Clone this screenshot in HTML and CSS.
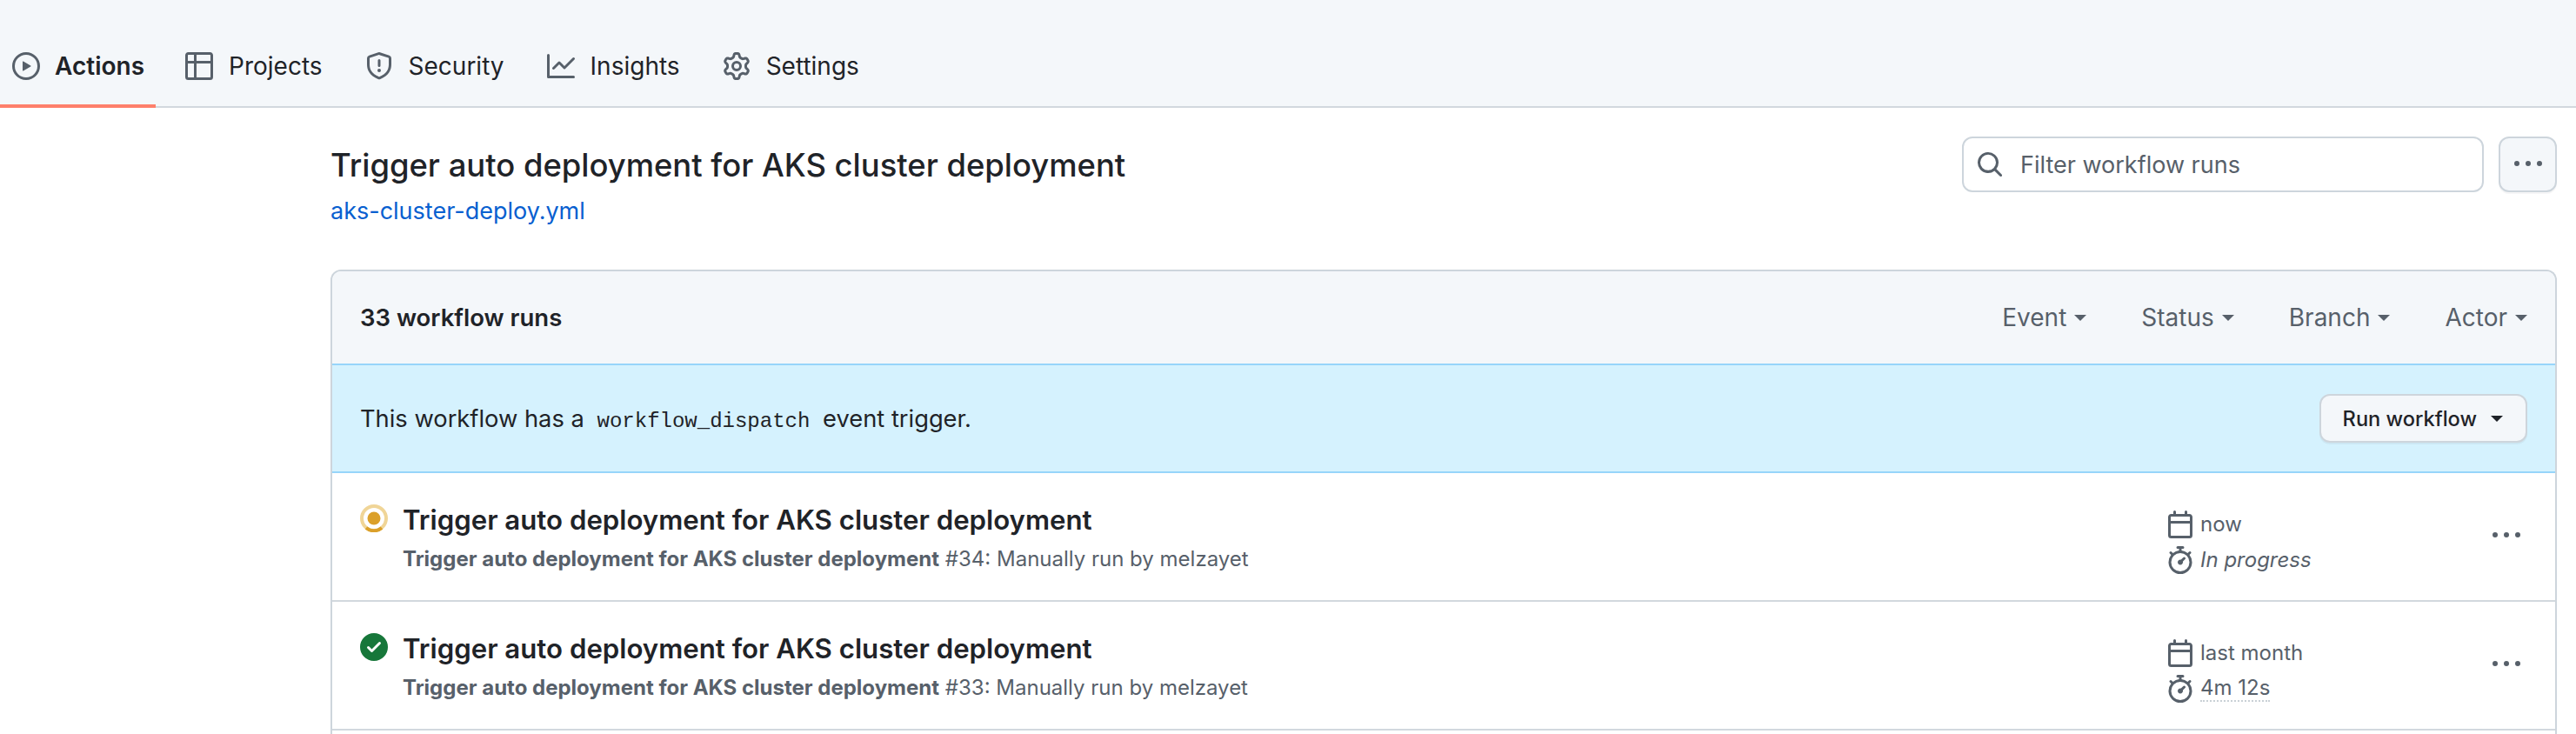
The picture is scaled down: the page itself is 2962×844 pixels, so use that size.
FILE: index.html
```html
<!DOCTYPE html>
<html lang="en">
  <head>
    <meta charset="UTF-8" />
    <meta name="viewport" content="width=device-width, initial-scale=1.0" />
    <title>Trigger auto deployment for AKS cluster deployment</title>
    <link rel="stylesheet" href="styles.css">
  </head>
  <body>
    <svg class="defs" aria-hidden="true">
      <symbol id="i-play" viewBox="0 0 16 16"><path d="M8 0a8 8 0 1 1 0 16A8 8 0 0 1 8 0ZM1.5 8a6.5 6.5 0 1 0 13 0 6.5 6.5 0 0 0-13 0Zm4.879-2.773 4.264 2.559a.25.25 0 0 1 0 .428l-4.264 2.559A.25.25 0 0 1 6 10.559V5.442a.25.25 0 0 1 .379-.215Z"/></symbol>
      <symbol id="i-table" viewBox="0 0 16 16"><path d="M0 1.75C0 .784.784 0 1.75 0h12.5C15.216 0 16 .784 16 1.75v12.5A1.75 1.75 0 0 1 14.25 16H1.75A1.75 1.75 0 0 1 0 14.25ZM6.5 6.5v8h7.75a.25.25 0 0 0 .25-.25V6.5Zm8-1.5V1.75a.25.25 0 0 0-.25-.25H6.5V5Zm-13 1.5v7.75c0 .138.112.25.25.25H5v-8ZM5 5V1.5H1.75a.25.25 0 0 0-.25.25V5Z"/></symbol>
      <symbol id="i-shield" viewBox="0 0 16 16"><path d="M7.467.133a1.748 1.748 0 0 1 1.066 0l5.25 1.68A1.75 1.75 0 0 1 15 3.48V7c0 1.566-.32 3.182-1.303 4.682-.983 1.498-2.585 2.813-5.032 3.855a1.697 1.697 0 0 1-1.33 0c-2.447-1.042-4.049-2.357-5.032-3.855C1.32 10.182 1 8.566 1 7V3.48a1.75 1.75 0 0 1 1.217-1.667Zm.61 1.429a.25.25 0 0 0-.153 0l-5.25 1.68a.25.25 0 0 0-.174.238V7c0 1.358.275 2.666 1.057 3.86.784 1.194 2.121 2.34 4.366 3.297a.196.196 0 0 0 .154 0c2.245-.956 3.582-2.104 4.366-3.298C13.225 9.666 13.5 8.36 13.5 7V3.48a.251.251 0 0 0-.174-.237l-5.25-1.68ZM8.75 4.75v3a.75.75 0 0 1-1.5 0v-3a.75.75 0 0 1 1.5 0ZM9 10.5a1 1 0 1 1-2 0 1 1 0 0 1 2 0Z"/></symbol>
      <symbol id="i-graph" viewBox="0 0 16 16"><path d="M1.5 1.75V13.5h13.75a.75.75 0 0 1 0 1.5H.75a.75.75 0 0 1-.75-.75V1.75a.75.75 0 0 1 1.5 0Zm14.28 2.53-5.25 5.25a.75.75 0 0 1-1.06 0L7 7.06 4.28 9.78a.751.751 0 0 1-1.042-.018.751.751 0 0 1-.018-1.042l3.25-3.25a.75.75 0 0 1 1.06 0L10 7.94l4.72-4.72a.751.751 0 0 1 1.042.018.751.751 0 0 1 .018 1.042Z"/></symbol>
      <symbol id="i-gear" viewBox="0 0 16 16"><path d="M8 0a8.2 8.2 0 0 1 .701.031C9.444.095 9.99.645 10.16 1.29l.288 1.107c.018.066.079.158.212.224.231.114.454.243.668.386.123.082.233.09.299.071l1.103-.303c.644-.176 1.392.021 1.82.63.27.385.506.792.704 1.218.315.675.111 1.422-.364 1.891l-.814.806c-.049.048-.098.147-.088.294.016.257.016.515 0 .772-.01.147.038.246.088.294l.814.806c.475.469.679 1.216.364 1.891a7.977 7.977 0 0 1-.704 1.217c-.428.61-1.176.807-1.82.63l-1.102-.302c-.067-.019-.177-.011-.3.071a5.909 5.909 0 0 1-.668.386c-.133.066-.194.158-.211.224l-.29 1.106c-.168.646-.715 1.196-1.458 1.26a8.006 8.006 0 0 1-1.402 0c-.743-.064-1.289-.614-1.458-1.26l-.289-1.106c-.018-.066-.079-.158-.212-.224a5.738 5.738 0 0 1-.668-.386c-.123-.082-.233-.09-.299-.071l-1.103.303c-.644.176-1.392-.021-1.82-.63a8.12 8.12 0 0 1-.704-1.218c-.315-.675-.111-1.422.363-1.891l.815-.806c.05-.048.098-.147.088-.294a6.214 6.214 0 0 1 0-.772c.01-.147-.038-.246-.088-.294l-.815-.806C.635 6.045.431 5.298.746 4.623a7.92 7.92 0 0 1 .704-1.217c.428-.61 1.176-.807 1.82-.63l1.102.302c.067.019.177.011.3-.071.214-.143.437-.272.668-.386.133-.066.194-.158.211-.224l.29-1.106C6.009.645 6.556.095 7.299.03 7.53.01 7.764 0 8 0Zm-.571 1.525c-.036.003-.108.036-.137.146l-.289 1.105c-.147.561-.549.967-.998 1.189-.173.086-.34.183-.5.29-.417.278-.97.423-1.529.27l-1.103-.303c-.109-.03-.175.016-.195.045-.22.312-.412.644-.573.99-.014.031-.021.11.059.19l.815.806c.411.406.562.957.53 1.456a4.709 4.709 0 0 0 0 .582c.032.499-.119 1.05-.53 1.456l-.815.806c-.081.08-.073.159-.059.19.162.346.353.677.573.989.02.03.085.076.195.046l1.102-.303c.56-.153 1.113-.008 1.53.27.161.107.328.204.501.29.447.222.85.629.997 1.189l.289 1.105c.029.109.101.143.137.146a6.6 6.6 0 0 0 1.142 0c.036-.003.108-.036.137-.146l.289-1.105c.147-.561.549-.967.998-1.189.173-.086.34-.183.5-.29.417-.278.97-.423 1.529-.27l1.103.303c.109.029.175-.016.195-.045.22-.313.411-.644.573-.99.014-.031.021-.11-.059-.19l-.815-.806c-.411-.406-.562-.957-.53-1.456a4.709 4.709 0 0 0 0-.582c-.032-.499.119-1.05.53-1.456l.815-.806c.081-.08.073-.159.059-.19a6.464 6.464 0 0 0-.573-.989c-.02-.03-.085-.076-.195-.046l-1.102.303c-.56.153-1.113.008-1.53-.27a4.44 4.44 0 0 0-.501-.29c-.447-.222-.85-.629-.997-1.189l-.289-1.105c-.029-.11-.101-.143-.137-.146a6.6 6.6 0 0 0-1.142 0ZM11 8a3 3 0 1 1-6 0 3 3 0 0 1 6 0ZM9.5 8a1.5 1.5 0 1 0-3.001.001A1.5 1.5 0 0 0 9.5 8Z"/></symbol>
      <symbol id="i-search" viewBox="0 0 16 16"><path d="M10.68 11.74a6 6 0 0 1-7.922-8.982 6 6 0 0 1 8.982 7.922l3.04 3.04a.749.749 0 0 1-.326 1.275.749.749 0 0 1-.734-.215ZM11.5 7a4.499 4.499 0 1 0-8.997 0A4.499 4.499 0 0 0 11.5 7Z"/></symbol>
      <symbol id="i-kebab" viewBox="0 0 16 16"><path d="M8 9a1.5 1.5 0 1 0 0-3 1.5 1.5 0 0 0 0 3ZM1.5 9a1.5 1.5 0 1 0 0-3 1.5 1.5 0 0 0 0 3Zm13 0a1.5 1.5 0 1 0 0-3 1.5 1.5 0 0 0 0 3Z"/></symbol>
      <symbol id="i-calendar" viewBox="0 0 16 16"><path d="M4.75 0a.75.75 0 0 1 .75.75V2h5V.75a.75.75 0 0 1 1.5 0V2h1.25c.966 0 1.75.784 1.75 1.75v10.5A1.75 1.75 0 0 1 13.25 16H2.75A1.75 1.75 0 0 1 1 14.25V3.75C1 2.784 1.784 2 2.75 2H4V.75A.75.75 0 0 1 4.75 0ZM2.5 7.5v6.75c0 .138.112.25.25.25h10.5a.25.25 0 0 0 .25-.25V7.5Zm10.75-4H2.75a.25.25 0 0 0-.25.25V6h11V3.75a.25.25 0 0 0-.25-.25Z"/></symbol>
      <symbol id="i-stopwatch" viewBox="0 0 16 16"><path d="M5.75.75A.75.75 0 0 1 6.5 0h3a.75.75 0 0 1 0 1.5h-.75v1l-.001.041a6.724 6.724 0 0 1 3.464 1.435l.007-.006.75-.75a.749.749 0 0 1 1.275.326.749.749 0 0 1-.215.734l-.75.75-.006.007a6.75 6.75 0 1 1-10.548 0L2.72 5.03l-.75-.75a.751.751 0 0 1 .018-1.042.751.751 0 0 1 1.042-.018l.75.75.007.006A6.72 6.72 0 0 1 7.25 2.541V1.5H6.5a.75.75 0 0 1-.75-.75ZM8 14.5a5.25 5.25 0 1 0-.001-10.501A5.25 5.25 0 0 0 8 14.5Zm.389-6.7 1.33-1.33a.75.75 0 1 1 1.061 1.06L9.45 8.861A1.503 1.503 0 0 1 8 10.75a1.499 1.499 0 1 1 .389-2.95Z"/></symbol>
      <symbol id="i-check" viewBox="0 0 16 16"><path d="M8 16A8 8 0 1 1 8 0a8 8 0 0 1 0 16Zm3.78-9.72a.751.751 0 0 0-.018-1.042.751.751 0 0 0-1.042-.018L6.75 9.19 5.28 7.72a.751.751 0 0 0-1.042.018.751.751 0 0 0-.018 1.042l2 2a.75.75 0 0 0 1.06 0Z"/></symbol>
    </svg>

    <nav class="tabs">
      <a class="tab active"><svg class="icon"><use href="#i-play"/></svg>Actions</a>
      <a class="tab"><svg class="icon"><use href="#i-table"/></svg>Projects</a>
      <a class="tab"><svg class="icon"><use href="#i-shield"/></svg>Security</a>
      <a class="tab"><svg class="icon"><use href="#i-graph"/></svg>Insights</a>
      <a class="tab"><svg class="icon"><use href="#i-gear"/></svg>Settings</a>
    </nav>

    <main class="content">
      <div class="top">
        <div class="top-title">
          <h1>Trigger auto deployment for AKS cluster deployment</h1>
          <a class="file-link">aks-cluster-deploy.yml</a>
        </div>
        <div class="top-tools">
          <label class="search">
            <svg class="icon"><use href="#i-search"/></svg>
            <span>Filter workflow runs</span>
          </label>
          <button class="more-btn"><svg class="icon"><use href="#i-kebab"/></svg></button>
        </div>
      </div>

      <section class="box">
        <div class="box-head">
          <strong>33 workflow runs</strong>
          <div class="filters">
            <span class="filter">Event<i class="caret"></i></span>
            <span class="filter">Status<i class="caret"></i></span>
            <span class="filter">Branch<i class="caret"></i></span>
            <span class="filter">Actor<i class="caret"></i></span>
          </div>
        </div>

        <div class="notice">
          <span>This workflow has a <code>workflow_dispatch</code> event trigger.</span>
          <button class="run-btn">Run workflow<i class="caret"></i></button>
        </div>

        <div class="run">
          <svg class="status" viewBox="0 0 32 32">
            <circle class="ring" cx="16" cy="16" r="14" />
            <path class="ring-arc" d="M7 27a14 14 0 0 0 18 0" />
            <circle class="dot" cx="16" cy="16" r="7.5" />
          </svg>
          <div class="run-main">
            <div class="run-title">Trigger auto deployment for AKS cluster deployment</div>
            <div class="run-sub"><b>Trigger auto deployment for AKS cluster deployment</b> #34: Manually run by melzayet</div>
          </div>
          <div class="run-meta">
            <div class="meta-line"><svg class="icon"><use href="#i-calendar"/></svg>now</div>
            <div class="meta-line"><svg class="icon"><use href="#i-stopwatch"/></svg><em>In progress</em></div>
          </div>
          <svg class="icon run-more"><use href="#i-kebab"/></svg>
        </div>

        <div class="run">
          <svg class="status success"><use href="#i-check"/></svg>
          <div class="run-main">
            <div class="run-title">Trigger auto deployment for AKS cluster deployment</div>
            <div class="run-sub"><b>Trigger auto deployment for AKS cluster deployment</b> #33: Manually run by melzayet</div>
          </div>
          <div class="run-meta">
            <div class="meta-line"><svg class="icon"><use href="#i-calendar"/></svg>last month</div>
            <div class="meta-line"><svg class="icon"><use href="#i-stopwatch"/></svg><span class="dotted">4m 12s</span></div>
          </div>
          <svg class="icon run-more"><use href="#i-kebab"/></svg>
        </div>
      </section>
    </main>
  </body>
</html>
```

FILE: styles.css
```css
* {
  box-sizing: border-box;
}
html,
body {
  margin: 0;
  height: 844px;
  overflow: hidden;
}
body {
  background: #fff;
  color: #1f2328;
  font-family: Inter, "Liberation Sans", sans-serif;
  font-size: 28px;
}
.defs {
  display: none;
}
.icon {
  width: 32px;
  height: 32px;
  fill: #57606a;
  flex: none;
}

/* tabs */
.tabs {
  display: flex;
  align-items: flex-end;
  gap: 19px;
  height: 124px;
  padding-bottom: 2px;
  background: #f4f7fa;
  border-bottom: 2px solid #d2d8de;
}
.tab {
  display: flex;
  align-items: center;
  gap: 18px;
  height: 78px;
  padding: 0 15px 14px;
  margin-bottom: -4px;
  border-bottom: 4px solid transparent;
}
.tab.active {
  gap: 17px;
  padding-left: 14px;
  padding-right: 13px;
  font-weight: 600;
  border-bottom-color: #fe7f6b;
}

/* title row */
.content {
  padding: 33px 22px 0 380px;
}
.top {
  display: flex;
  justify-content: space-between;
  align-items: flex-start;
  height: 153px;
}
h1 {
  margin: 0 0 2px;
  font-size: 36.4px;
  font-weight: 500;
  line-height: 66px;
}
.file-link {
  display: block;
  color: #0860d0;
  font-size: 27px;
  line-height: 36px;
}
.top-tools {
  display: flex;
  gap: 17px;
}
.search {
  display: flex;
  align-items: center;
  gap: 19px;
  width: 600px;
  height: 64px;
  padding: 0 14px;
  border: 2px solid #cdd5dc;
  border-radius: 12px;
  color: #57606a;
  font-size: 27px;
}
.more-btn {
  display: flex;
  justify-content: center;
  align-items: center;
  width: 67px;
  height: 64px;
  padding: 0;
  background: #f4f7fa;
  border: 2px solid #cdd5dc;
  border-radius: 12px;
  box-shadow: 0 2px 0 rgba(31, 35, 40, 0.04);
}

/* workflow runs box */
.box {
  height: 534px;
  border: 2px solid #cdd5dc;
  border-bottom: 0;
  border-radius: 12px 12px 0 0;
}
.box-head {
  display: flex;
  justify-content: space-between;
  align-items: center;
  height: 106px;
  padding: 0 32px;
  background: #f4f7fa;
  border-radius: 10px 10px 0 0;
}
.box-head strong {
  font-size: 27.5px;
  font-weight: 600;
}
.filters {
  display: flex;
  gap: 63px;
  color: #57606a;
}
.filter {
  display: flex;
  align-items: center;
}
.caret {
  display: inline-block;
  margin-left: 9px;
  border-top: 7px solid currentColor;
  border-left: 7px solid transparent;
  border-right: 7px solid transparent;
}
.notice {
  display: flex;
  justify-content: space-between;
  align-items: center;
  height: 126px;
  padding: 0 32px;
  background: #d5f2fe;
  border-top: 2px solid #97d5fa;
  border-bottom: 2px solid #97d5fa;
  font-size: 27.3px;
}
code {
  font-family: "Liberation Mono", monospace;
  font-size: 24px;
  margin: 0 7px;
}
.run-btn {
  display: flex;
  align-items: center;
  height: 56px;
  padding: 0 26px 0 25px;
  background: #f4f7fa;
  border: 2px solid #cdd5dc;
  border-radius: 12px;
  box-shadow: 0 2px 0 rgba(31, 35, 40, 0.05);
  color: #1f2328;
  font-family: inherit;
  font-size: 23.6px;
  font-weight: 500;
}
.run-btn .caret {
  margin-left: 16px;
}

/* run rows */
.run {
  display: flex;
  align-items: flex-start;
  height: 148px;
  padding: 36px 32px 0;
  border-bottom: 2px solid #d2d8de;
}
.status {
  width: 32px;
  height: 32px;
  margin-right: 17px;
  flex: none;
}
.status.success {
  fill: #17773a;
}
.ring {
  fill: none;
  stroke: #e3b341;
  stroke-opacity: 0.55;
  stroke-width: 4;
}
.ring-arc {
  fill: none;
  stroke: #dba02a;
  stroke-width: 4;
}
.dot {
  fill: #dba02a;
}
.run-main {
  flex: 1;
  margin-top: 2px;
}
.run-title {
  font-size: 31.2px;
  font-weight: 600;
  line-height: 32px;
}
.run-sub {
  margin-top: 13px;
  color: #57606a;
  font-size: 24px;
  line-height: 32px;
}
.run-sub b {
  font-weight: 700;
}
.run-meta {
  width: 375px;
  margin-top: 2px;
  color: #57606a;
  font-size: 24px;
}
.meta-line {
  display: flex;
  align-items: center;
  gap: 7px;
  height: 41px;
}
.dotted {
  border-bottom: 2px dotted #c9d0d6;
}
.run-more {
  margin: 20px 8px 0 0;
}
```
